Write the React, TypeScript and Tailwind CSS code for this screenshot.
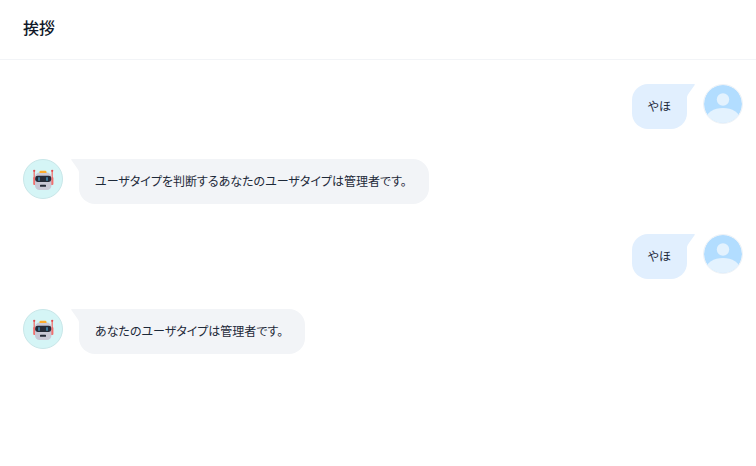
interface Message {
  id: number;
  from: "user" | "bot";
  text: string;
}

const messages: Message[] = [
  { id: 1, from: "user", text: "やほ" },
  { id: 2, from: "bot", text: "ユーザタイプを判断するあなたのユーザタイプは管理者です。" },
  { id: 3, from: "user", text: "やほ" },
  { id: 4, from: "bot", text: "あなたのユーザタイプは管理者です。" },
];

function BotAvatar() {
  return (
    <svg viewBox="0 0 40 40" className="size-10 shrink-0" role="img" aria-label="Bot">
      <circle cx="20" cy="20" r="19.5" fill="#d5f5f6" stroke="#c8e6e8" />
      {/* antennas and ears */}
      <path d="M11.2 12v8M29.2 12v8" stroke="#ee7b78" strokeWidth="1.4" />
      <circle cx="11.2" cy="11.8" r="1.1" fill="#e5484d" />
      <circle cx="29.2" cy="11.8" r="1.1" fill="#e5484d" />
      <rect x="10.2" y="18" width="3" height="8" rx="1" fill="#f0706e" />
      <rect x="27.4" y="18" width="3" height="8" rx="1" fill="#f0706e" />
      {/* head */}
      <rect x="12" y="13.6" width="16.4" height="17.4" rx="4.5" fill="#c9c8d6" />
      <path d="M16.5 14v-1a1.3 1.3 0 0 1 1.3-1.3h4.4a1.3 1.3 0 0 1 1.3 1.3v1z" fill="#fdab2c" />
      <rect x="12.2" y="16.7" width="16" height="6.3" rx="2.4" fill="#252a38" />
      <rect x="15" y="18" width="2" height="4" rx="1" fill="#3c7899" />
      <rect x="23" y="18" width="2" height="4" rx="1" fill="#3c7899" />
      <rect x="17" y="25.8" width="6" height="2" rx=".6" fill="#252a38" />
    </svg>
  );
}

function UserAvatar() {
  return (
    <svg viewBox="0 0 40 40" className="size-10 shrink-0" role="img" aria-label="User">
      <defs>
        <clipPath id="user-clip">
          <circle cx="20" cy="20" r="19" />
        </clipPath>
      </defs>
      <circle cx="20" cy="20" r="19" fill="#b2ddff" />
      <g clipPath="url(#user-clip)" fill="#e3f2fe">
        <circle cx="20" cy="15.5" r="6.2" />
        <ellipse cx="20" cy="35" rx="17" ry="11" />
      </g>
      <circle cx="20" cy="20" r="19.5" fill="none" stroke="#edf2f7" />
    </svg>
  );
}

function Bubble({ from, text }: Omit<Message, "id">) {
  const isUser = from === "user";

  return (
    <div
      className={
        isUser
          ? "relative mr-2 rounded-2xl rounded-tr-none bg-[#e1effe] px-4 pt-[11px] pb-[13px]"
          : "relative ml-2 rounded-2xl rounded-tl-none bg-[#f2f4f7] pt-[11px] pr-[22px] pb-[13px] pl-4"
      }
    >
      <svg
        viewBox="0 0 8 13"
        className={
          isUser
            ? "absolute top-0 left-full h-[13px] w-2 fill-[#e1effe]"
            : "absolute top-0 right-full h-[13px] w-2 -scale-x-100 fill-[#f2f4f7]"
        }
        aria-hidden="true"
      >
        <path d="M0 0h7.2q1 0 .5.9L2 9Q.4 11 0 13z" />
      </svg>
      <p className="text-xs leading-[21px] [font-feature-settings:'palt']">{text}</p>
    </div>
  );
}

export default function App() {
  return (
    <div className="min-h-screen bg-white font-['Noto_Sans_CJK_JP',sans-serif] text-[#1d2939]">
      <header className="border-b border-[#f2f4f7] px-[23px] pt-[14px] pb-[18px]">
        <h1 className="text-base leading-[27px] font-medium text-[#101828]">挨拶</h1>
      </header>
      <main className="flex flex-col gap-[30px] py-6 pr-[13px] pl-[23px]">
        {messages.map(({ id, from, text }) =>
          from === "user" ? (
            <div key={id} className="flex items-start justify-end gap-2">
              <Bubble from={from} text={text} />
              <UserAvatar />
            </div>
          ) : (
            <div key={id} className="flex items-start gap-2">
              <BotAvatar />
              <Bubble from={from} text={text} />
            </div>
          )
        )}
      </main>
    </div>
  );
}
